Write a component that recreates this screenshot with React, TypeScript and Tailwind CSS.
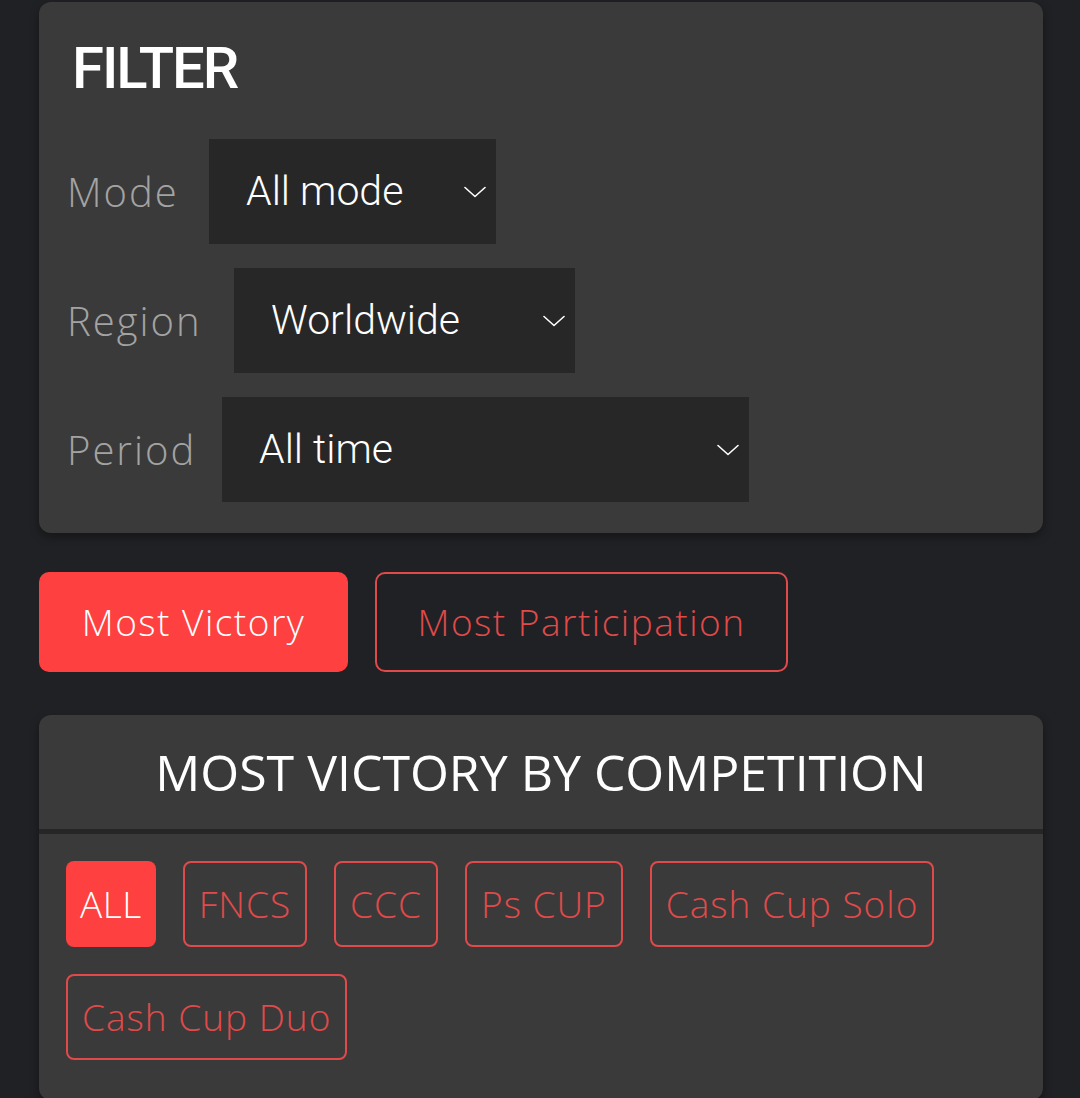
const poppins = { fontFamily: '"Open Sans", "Noto Sans", sans-serif' };
const roboto = { fontFamily: 'Roboto, "Liberation Sans", sans-serif' };

type FilterRow = { label: string; value: string; labelWidth: string; width: string };

const FILTERS: FilterRow[] = [
  { label: "Mode", value: "All mode", labelWidth: "w-[142px]", width: "w-[287px]" },
  { label: "Region", value: "Worldwide", labelWidth: "w-[167px]", width: "w-[341px]" },
  { label: "Period", value: "All time", labelWidth: "w-[155px]", width: "w-[527px]" },
];

const COMPETITIONS = ["ALL", "FNCS", "CCC", "Ps CUP", "Cash Cup Solo", "Cash Cup Duo"];

function Chevron() {
  return (
    <svg width="22" height="12" viewBox="0 0 22 12" fill="none" className="shrink-0">
      <path d="M1 1.5 L11 10.5 L21 1.5" stroke="white" strokeWidth="1.6" strokeLinecap="round" strokeLinejoin="round" />
    </svg>
  );
}

function Select({ value, width }: { value: string; width: string }) {
  return (
    <div
      className={`${width} h-[105px] bg-[#272727] flex items-center justify-between pl-[37px] pr-[10px] text-white text-[41px] font-light`}
      style={roboto}
    >
      <span>{value}</span>
      <Chevron />
    </div>
  );
}

export default function App() {
  return (
    <div className="min-h-[1098px] bg-[#202124] px-[39px] pt-[2px] pb-10" style={poppins}>
      <div className="w-[1004px] rounded-[12px] bg-[#3a3a3a] shadow-[0_4px_10px_rgba(0,0,0,0.35)] px-[28px] pt-[28px] pb-[31px]">
        <h2 className="text-[58px] leading-[76px] font-medium text-white tracking-[-2px] mb-[33px] ml-[5px]" style={roboto}>
          FILTER
        </h2>
        <div className="flex flex-col gap-[24px]">
          {FILTERS.map((f) => (
            <div key={f.label} className="flex items-center">
              <span className={`${f.labelWidth} shrink-0 text-[40px] font-light text-[#a3a3a3] tracking-[2px]`}>
                {f.label}
              </span>
              <Select value={f.value} width={f.width} />
            </div>
          ))}
        </div>
      </div>

      <div className="flex gap-[27px] mt-[39px]">
        <button className="w-[309px] h-[100px] rounded-[10px] bg-[#fe4040] text-white text-[37px] font-light tracking-[1.5px]">
          Most Victory
        </button>
        <button className="w-[413px] h-[100px] rounded-[10px] border-2 border-[#e04a4a] text-[#e04a4a] text-[37px] font-light tracking-[1.5px]">
          Most Participation
        </button>
      </div>

      <div className="w-[1004px] mt-[43px] rounded-[12px] bg-[#3a3a3a] shadow-[0_4px_10px_rgba(0,0,0,0.35)] overflow-hidden">
        <div className="h-[114px] flex items-center justify-center text-white text-[50px] font-normal">
          MOST VICTORY BY COMPETITION
        </div>
        <div className="h-[5px] bg-[#262626]" />
        <div className="flex flex-wrap gap-[27px] px-[27px] pt-[27px] pb-[40px]">
          {COMPETITIONS.map((c, i) => (
            <div
              key={c}
              className={
                i === 0
                  ? "h-[86px] px-[14px] flex items-center rounded-[8px] bg-[#fe4040] text-white text-[37px] font-light tracking-[0.5px]"
                  : "h-[86px] px-[14px] flex items-center rounded-[8px] border-2 border-[#e04a4a] text-[#e04a4a] text-[37px] font-light tracking-[1px]"
              }
            >
              {c}
            </div>
          ))}
        </div>
      </div>
    </div>
  );
}
